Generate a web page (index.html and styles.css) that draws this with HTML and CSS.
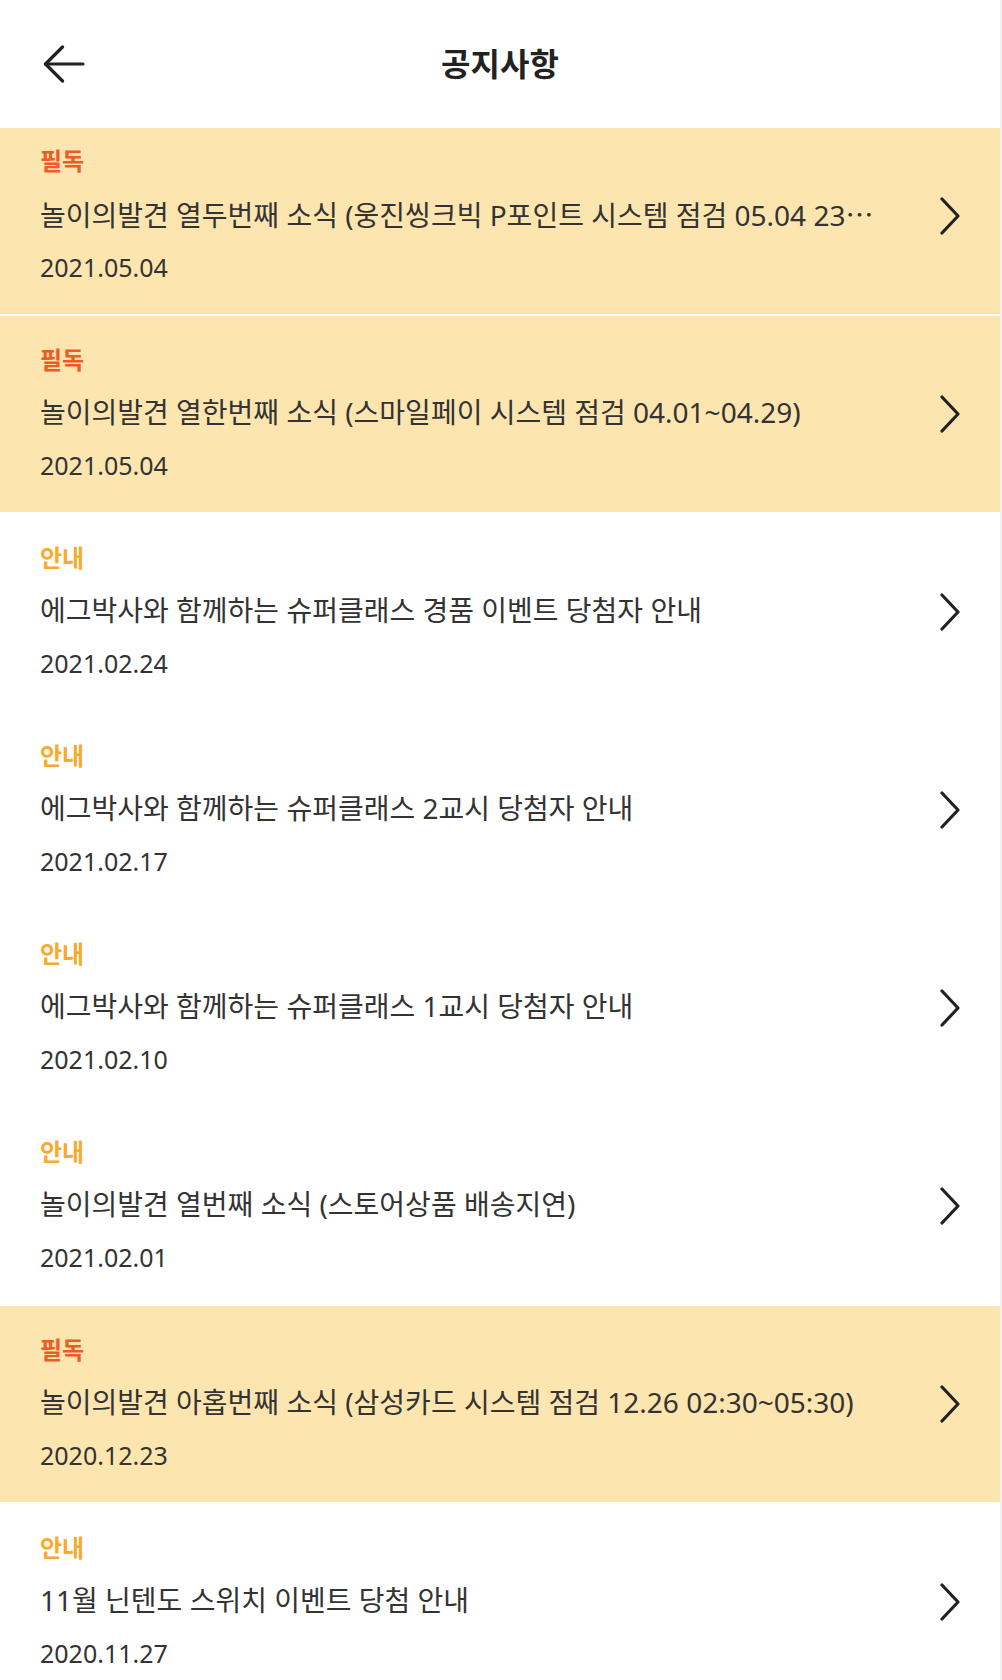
FILE: index.html
```html
<!DOCTYPE html>
<html lang="ko">
<head>
<meta charset="utf-8">
<title>공지사항</title>
<link rel="stylesheet" href="styles.css">
</head>
<body>
<div class="page">
  <header class="header">
    <div class="header-left">
      <svg class="back" width="42" height="38" viewBox="0 0 42 38" aria-hidden="true">
        <path d="M2.5 19 H40" />
        <path d="M19.5 2 L2.5 19 L19.5 36" />
      </svg>
    </div>
    <h1 class="title">공지사항</h1>
    <div class="header-right"></div>
  </header>
  <ul class="list">
    <li class="item item-pinned">
      <div class="info">
        <div class="tag tag-must">필독</div>
        <div class="subject" title="놀이의발견 열두번째 소식 (웅진씽크빅 P포인트 시스템 점검 05.04 23:00~05.05 03:00)">놀이의발견 열두번째 소식 (웅진씽크빅 P포인트 시스템 점검 05.04 23<span class="more">…</span></div>
        <div class="date">2021.05.04</div>
      </div>
      <svg class="chevron" width="22" height="38" viewBox="0 0 22 38" aria-hidden="true"><path d="M3 2 L19 19 L3 36" /></svg>
    </li>
    <li class="item item-pinned">
      <div class="info">
        <div class="tag tag-must">필독</div>
        <div class="subject">놀이의발견 열한번째 소식 (스마일페이 시스템 점검 04.01~04.29)</div>
        <div class="date">2021.05.04</div>
      </div>
      <svg class="chevron" width="22" height="38" viewBox="0 0 22 38" aria-hidden="true"><path d="M3 2 L19 19 L3 36" /></svg>
    </li>
    <li class="item">
      <div class="info">
        <div class="tag tag-info">안내</div>
        <div class="subject">에그박사와 함께하는 슈퍼클래스 경품 이벤트 당첨자 안내</div>
        <div class="date">2021.02.24</div>
      </div>
      <svg class="chevron" width="22" height="38" viewBox="0 0 22 38" aria-hidden="true"><path d="M3 2 L19 19 L3 36" /></svg>
    </li>
    <li class="item">
      <div class="info">
        <div class="tag tag-info">안내</div>
        <div class="subject">에그박사와 함께하는 슈퍼클래스 2교시 당첨자 안내</div>
        <div class="date">2021.02.17</div>
      </div>
      <svg class="chevron" width="22" height="38" viewBox="0 0 22 38" aria-hidden="true"><path d="M3 2 L19 19 L3 36" /></svg>
    </li>
    <li class="item">
      <div class="info">
        <div class="tag tag-info">안내</div>
        <div class="subject">에그박사와 함께하는 슈퍼클래스 1교시 당첨자 안내</div>
        <div class="date">2021.02.10</div>
      </div>
      <svg class="chevron" width="22" height="38" viewBox="0 0 22 38" aria-hidden="true"><path d="M3 2 L19 19 L3 36" /></svg>
    </li>
    <li class="item">
      <div class="info">
        <div class="tag tag-info">안내</div>
        <div class="subject">놀이의발견 열번째 소식 (스토어상품 배송지연)</div>
        <div class="date">2021.02.01</div>
      </div>
      <svg class="chevron" width="22" height="38" viewBox="0 0 22 38" aria-hidden="true"><path d="M3 2 L19 19 L3 36" /></svg>
    </li>
    <li class="item item-pinned">
      <div class="info">
        <div class="tag tag-must">필독</div>
        <div class="subject">놀이의발견 아홉번째 소식 (삼성카드 시스템 점검 12.26 02:30~05:30)</div>
        <div class="date">2020.12.23</div>
      </div>
      <svg class="chevron" width="22" height="38" viewBox="0 0 22 38" aria-hidden="true"><path d="M3 2 L19 19 L3 36" /></svg>
    </li>
    <li class="item">
      <div class="info">
        <div class="tag tag-info">안내</div>
        <div class="subject">11월 닌텐도 스위치 이벤트 당첨 안내</div>
        <div class="date">2020.11.27</div>
      </div>
      <svg class="chevron" width="22" height="38" viewBox="0 0 22 38" aria-hidden="true"><path d="M3 2 L19 19 L3 36" /></svg>
    </li>
  </ul>
</div>
</body>
</html>
```
FILE: styles.css
```css
html, body {
  margin: 0;
  padding: 0;
  background: #f0f0f0;
}
body {
  font-family: "Noto Sans", "Noto Sans CJK KR", sans-serif;
  color: #333333;
}
.page {
  width: 1000px;
  background: #ffffff;
  min-height: 1680px;
}
.header {
  height: 128px;
  display: grid;
  grid-template-columns: 1fr auto 1fr;
  align-items: center;
  background: #ffffff;
}
.header-left {
  display: flex;
  align-items: center;
  padding-left: 43px;
  padding-bottom: 1px;
}
.back {
  display: block;
  fill: none;
  stroke: #222222;
  stroke-width: 3.2;
  stroke-linecap: round;
  stroke-linejoin: round;
}
.title {
  margin: 0 0 1px;
  font-size: 32px;
  font-weight: 700;
  line-height: 40px;
  color: #222222;
}
.list {
  list-style: none;
  margin: 0;
  padding: 0;
}
.item {
  height: 196px;
  border-bottom: 2px solid #ffffff;
  display: flex;
  align-items: center;
  padding: 0 39px 0 40px;
  background: #ffffff;
}
.item:first-child {
  height: 186px;
}
.item:first-child .info,
.item:first-child .chevron {
  margin-top: -10px;
}
.item-pinned {
  background: #fde5b0;
}
.info {
  flex: 1;
  min-width: 0;
  display: flex;
  flex-direction: column;
}
.tag {
  font-size: 24px;
  font-weight: 700;
  line-height: 30px;
  margin-top: -4px;
}
.tag-must {
  color: #f05a24;
}
.tag-info {
  color: #f9a92b;
}
.subject {
  margin-top: 17.5px;
  font-size: 28px;
  line-height: 40px;
  color: #333333;
  white-space: nowrap;
  overflow: hidden;
  text-overflow: ellipsis;
}
.more {
  font-family: "Noto Sans CJK KR", sans-serif;
}
.date {
  margin-top: 17.5px;
  font-size: 25px;
  line-height: 30px;
  color: #333333;
}
.chevron {
  flex: none;
  display: block;
  margin-left: 62px;
  fill: none;
  stroke: #222222;
  stroke-width: 3.2;
  stroke-linecap: round;
  stroke-linejoin: round;
}
```
